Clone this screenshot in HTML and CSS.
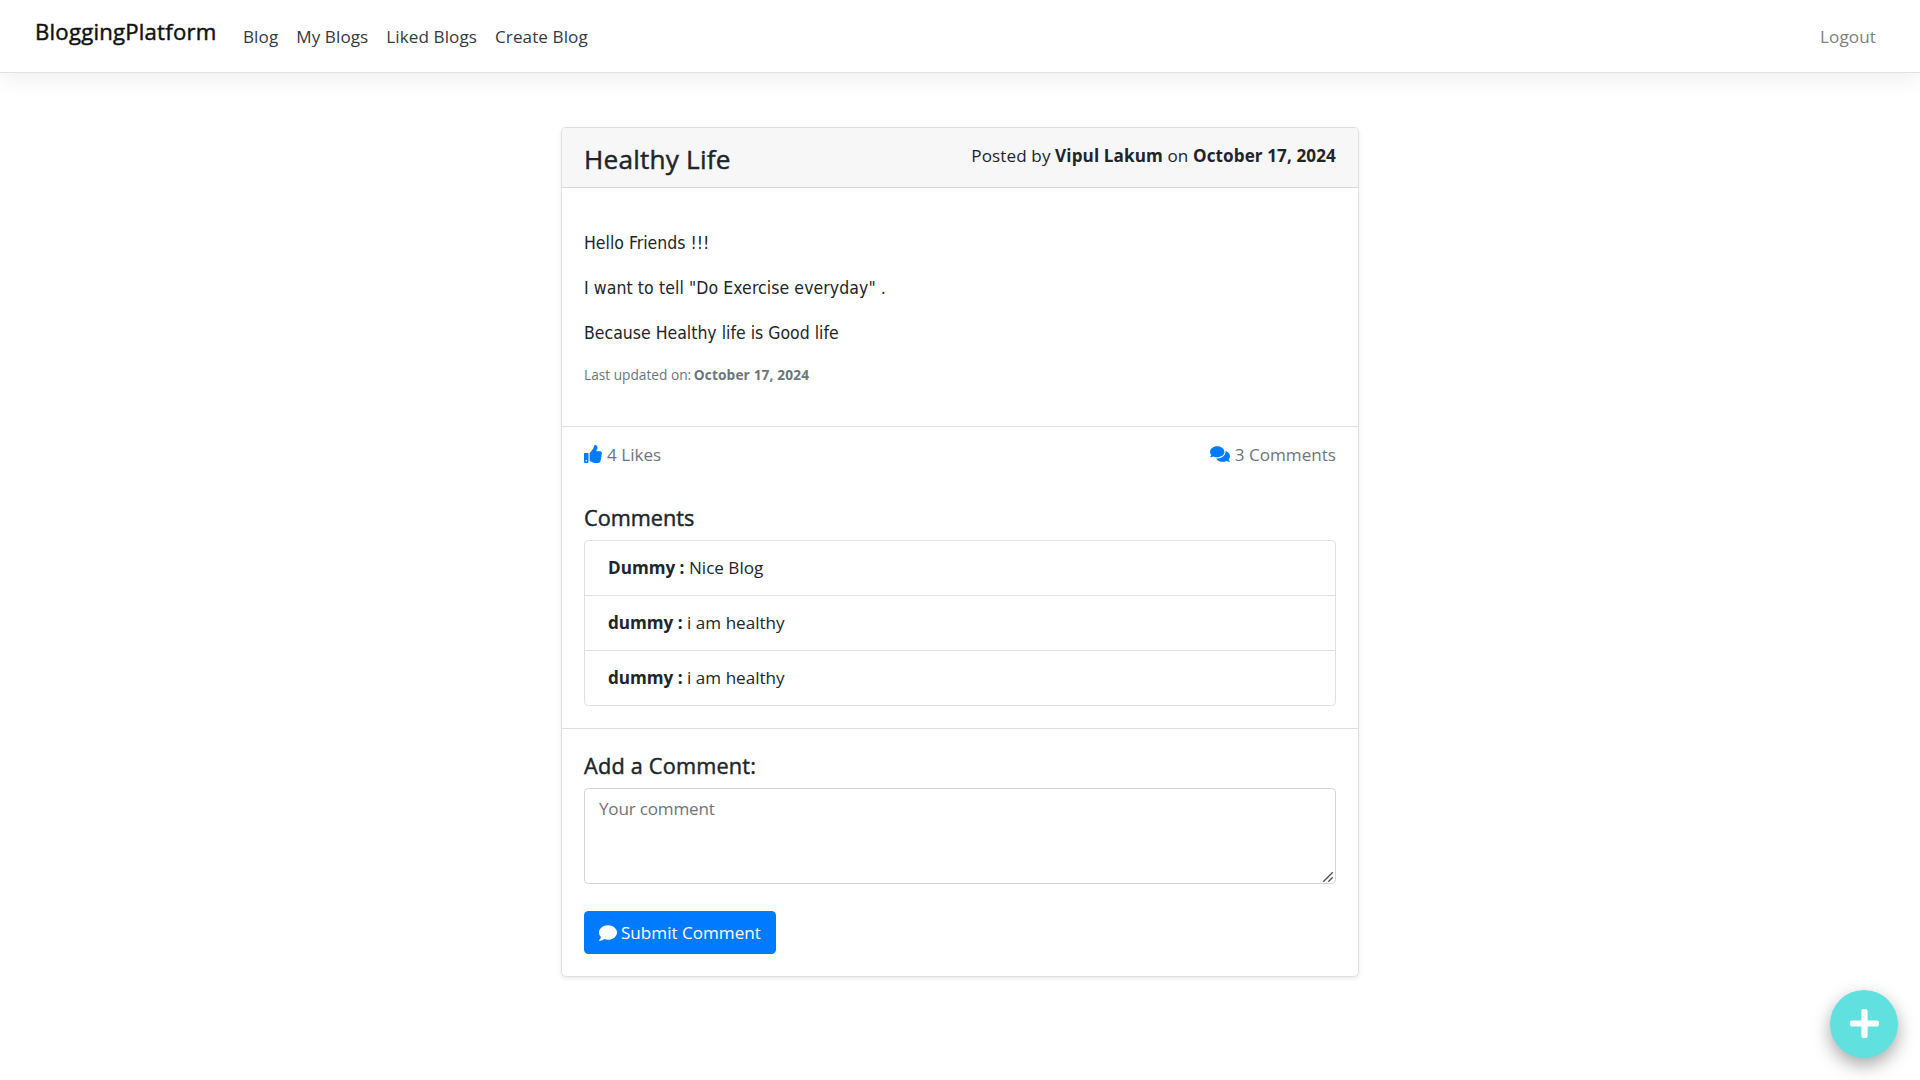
FILE: index.html
```html
<!DOCTYPE html>
<html lang="en">
<head>
<meta charset="utf-8">
<title>Healthy Life - BloggingPlatform</title>
<link rel="stylesheet" href="styles.css">
</head>
<body>
<nav class="navbar">
  <a class="brand">BloggingPlatform</a>
  <ul class="nav-links">
    <li>Blog</li>
    <li>My Blogs</li>
    <li>Liked Blogs</li>
    <li>Create Blog</li>
  </ul>
  <a class="logout">Logout</a>
</nav>

<main class="card">
  <header class="card-header">
    <h4>Healthy Life</h4>
    <div class="posted">Posted by <strong>Vipul Lakum</strong> on <strong>October 17, 2024</strong></div>
  </header>

  <section class="card-body">
    <p>Hello Friends !!!</p>
    <p>I want to tell "Do Exercise everyday" .</p>
    <p>Because Healthy life is Good life</p>
    <div class="updated">Last updated on: <strong>October 17, 2024</strong></div>
  </section>

  <section class="card-section">
    <div class="stats">
      <span class="stat"><svg class="icon-like" viewBox="0 0 512 512"><path d="M104 224H24c-13.255 0-24 10.745-24 24v240c0 13.255 10.745 24 24 24h80c13.255 0 24-10.745 24-24V248c0-13.255-10.745-24-24-24zM64 472c-13.255 0-24-10.745-24-24s10.745-24 24-24 24 10.745 24 24-10.745 24-24 24zM384 81.452c0 42.416-25.97 66.208-33.277 94.548h101.723c33.397 0 59.397 27.746 59.553 58.098.084 17.938-7.546 37.249-19.439 49.197l-.11.11c9.836 23.337 8.237 56.037-9.308 79.469 8.681 25.895-.069 57.704-16.382 74.757 4.298 17.598 2.244 32.575-6.148 44.632C440.202 511.587 389.616 512 346.839 512l-2.845-.001c-48.287-.017-87.806-17.598-119.56-31.725-15.957-7.099-36.821-15.887-52.651-16.178-6.54-.12-11.783-5.457-11.783-11.998v-213.77c0-3.2 1.282-6.271 3.558-8.521 39.614-39.144 56.648-80.587 89.117-113.111 14.804-14.832 20.188-37.236 25.393-58.902C282.515 39.293 291.817 0 312 0c24 0 72 8 72 81.452z"/></svg>4 Likes</span>
      <span class="stat"><svg class="icon-comments" viewBox="0 0 576 512"><path d="M416 192c0-88.4-93.1-160-208-160S0 103.600 0 192c0 34.300 14.100 65.900 38 92-13.400 30.200-35.500 54.200-35.800 54.500-2.200 2.300-2.800 5.700-1.500 8.700S4.800 352 8 352c36.600 0 66.900-12.300 88.700-25 32.200 15.700 70.300 25 111.300 25 114.900 0 208-71.600 208-160zm122 220c23.900-26 38-57.700 38-92 0-66.900-53.500-124.200-129.300-148.100.9 6.600 1.300 13.300 1.300 20.100 0 105.900-107.700 192-240 192-10.800 0-21.300-.8-31.700-1.900C207.800 439.600 281.800 480 368 480c41 0 79.100-9.200 111.300-25 21.800 12.700 52.100 25 88.700 25 3.200 0 6.100-1.900 7.300-4.800 1.300-2.900.7-6.300-1.500-8.700-.3-.3-22.400-24.200-35.800-54.500z"/></svg>3 Comments</span>
    </div>
    <h5>Comments</h5>
    <ul class="comment-list">
      <li><strong>Dummy :</strong> Nice Blog</li>
      <li><strong>dummy :</strong> i am healthy</li>
      <li><strong>dummy :</strong> i am healthy</li>
    </ul>
  </section>

  <form class="card-section comment-form">
    <h5>Add a Comment:</h5>
    <div class="field">
      <textarea placeholder="Your comment"></textarea>
      <svg class="grip" viewBox="0 0 10 10"><path d="M0.300 9.700L9.700 0.300M5.300 9.700L9.700 5.300"/></svg>
    </div>
    <button class="submit" type="button"><svg class="icon-comment" viewBox="0 0 512 512"><path d="M256 32C114.600 32 0 125.100 0 240c0 49.600 21.400 95 57 130.700C44.500 421.100 2.700 466 2.200 466.500c-2.200 2.300-2.800 5.700-1.500 8.700S4.800 480 8 480c66.300 0 116-31.800 140.600-51.400 32.700 12.300 69 19.400 107.400 19.400 141.400 0 256-93.100 256-208S397.400 32 256 32z"/></svg>Submit Comment</button>
  </form>
</main>

<a class="fab"><svg viewBox="0 0 448 512"><path d="M416 208H272V64c0-17.670-14.330-32-32-32h-32c-17.670 0-32 14.330-32 32v144H32c-17.670 0-32 14.330-32 32v32c0 17.670 14.330 32 32 32h144v144c0 17.670 14.330 32 32 32h32c17.670 0 32-14.330 32-32V304h144c17.670 0 32-14.330 32-32v-32c0-17.670-14.330-32-32-32z"/></svg></a>
</body>
</html>
```
FILE: styles.css
```css
* { box-sizing: border-box; }
body {
  margin: 0;
  min-height: 1080px;
  background: #fff;
  color: #212529;
  font: 400 17.1px/26px "Open Sans", "Noto Sans", sans-serif;
}
h4, h5, p, ul { margin: 0; padding: 0; }
ul { list-style: none; }
strong { font-weight: 700; }
svg { display: block; fill: currentColor; flex: none; }
.brand, h4, h5 { -webkit-text-stroke: .45px currentColor; }

.navbar {
  display: flex;
  align-items: flex-start;
  height: 73px;
  padding: 0 44px 0 35px;
  border-bottom: 1px solid #dee2e6;
  box-shadow: 0 9px 18px rgba(0, 0, 0, .05);
}
.brand {
  padding-top: 19px;
  width: 208px;
  font-size: 22.2px;
  font-weight: 500;
  letter-spacing: .2px;
  color: #111;
}
.nav-links {
  display: flex;
  gap: 18px;
  padding-top: 24px;
  letter-spacing: .08px;
  color: #343a40;
}
.logout {
  margin-left: auto;
  padding-top: 24px;
  letter-spacing: .1px;
  color: #808080;
}

.card {
  width: 798px;
  height: 850px;
  margin: 54px auto 0;
  border: 1px solid #dfdfdf;
  border-radius: 4.4px;
  box-shadow: 0 2px 4px rgba(0, 0, 0, .075);
}
.card-header {
  display: flex;
  justify-content: space-between;
  height: 60px;
  padding: 15px 22px 0;
  background: #f7f7f7;
  border-bottom: 1px solid #d8d8d8;
  border-radius: 3.4px 3.4px 0 0;
}
h4 {
  padding-top: 3px;
  font-size: 26.200px;
  font-weight: 500;
  letter-spacing: .2px;
}
.posted { letter-spacing: .1px; }
.card-body {
  height: 238px;
  padding: 42px 22px 0;
}
.card-body p {
  margin-bottom: 19px;
  font-family: "DejaVu Sans Condensed", "DejaVu Sans", sans-serif;
  font-stretch: condensed;
  font-size: 17.5px;
}
.card-body p:nth-child(2) { letter-spacing: .08px; }
.updated {
  margin-top: -2px;
  font-size: 13.700px;
  line-height: 24px;
  color: #6c757d;
}
.updated strong { letter-spacing: .13px; margin-left: -1px; }
.card-section {
  padding: 15px 22px 22px;
  border-top: 1px solid #dfdfdf;
}
.stats {
  display: flex;
  justify-content: space-between;
  color: #6c757d;
}
.stat {
  display: flex;
  align-items: center;
  gap: 5px;
}
.stat svg { margin-top: -2px; color: #007bff; }
.icon-like { width: 18px; height: 18px; }
.icon-comments { width: 20px; height: 18px; }
h5 {
  margin: 37px 0 9px;
  font-size: 21.700px;
  font-weight: 500;
}
.comment-list {
  border: 1px solid #dfdfdf;
  border-radius: 4.4px;
}
.comment-list li {
  height: 55px;
  padding: 13px 23px;
}
.comment-list li:first-child { height: 54px; padding-top: 14px; }
.comment-list li + li { padding-top: 14px; border-top: 1px solid #dfdfdf; }

.comment-form { padding-top: 24px; }
.comment-form h5 { margin-top: 0; letter-spacing: .2px; }
.field { position: relative; height: 96px; }
textarea {
  display: block;
  width: 100%;
  height: 96px;
  padding: 7px 14px;
  border: 1px solid #ced4da;
  border-radius: 4.4px;
  resize: none;
  font: inherit;
  color: #495057;
}
textarea::placeholder { color: #6c757d; opacity: 1; letter-spacing: -.2px; }
.grip {
  position: absolute;
  right: 3px;
  bottom: 2px;
  width: 10px;
  height: 10px;
  fill: none;
  stroke: #505050;
  stroke-width: 1.4;
}
.submit {
  display: flex;
  align-items: center;
  gap: 4px;
  width: 192px;
  height: 43px;
  margin-top: 27px;
  padding: 0 14px 0 15px;
  border: 0;
  border-radius: 4.4px;
  background: #007bff;
  color: #fff;
  font: inherit;
  white-space: nowrap;
}
.icon-comment { width: 18px; height: 18px; }

.fab {
  position: fixed;
  right: 22px;
  bottom: 22px;
  display: flex;
  align-items: center;
  justify-content: center;
  width: 68px;
  height: 68px;
  padding-bottom: 2px;
  border-radius: 50%;
  background: #60e0de;
  color: #fff;
  box-shadow: 0 7px 18px rgba(0, 0, 0, .35);
}
.fab svg { width: 29px; height: 33px; }
```
